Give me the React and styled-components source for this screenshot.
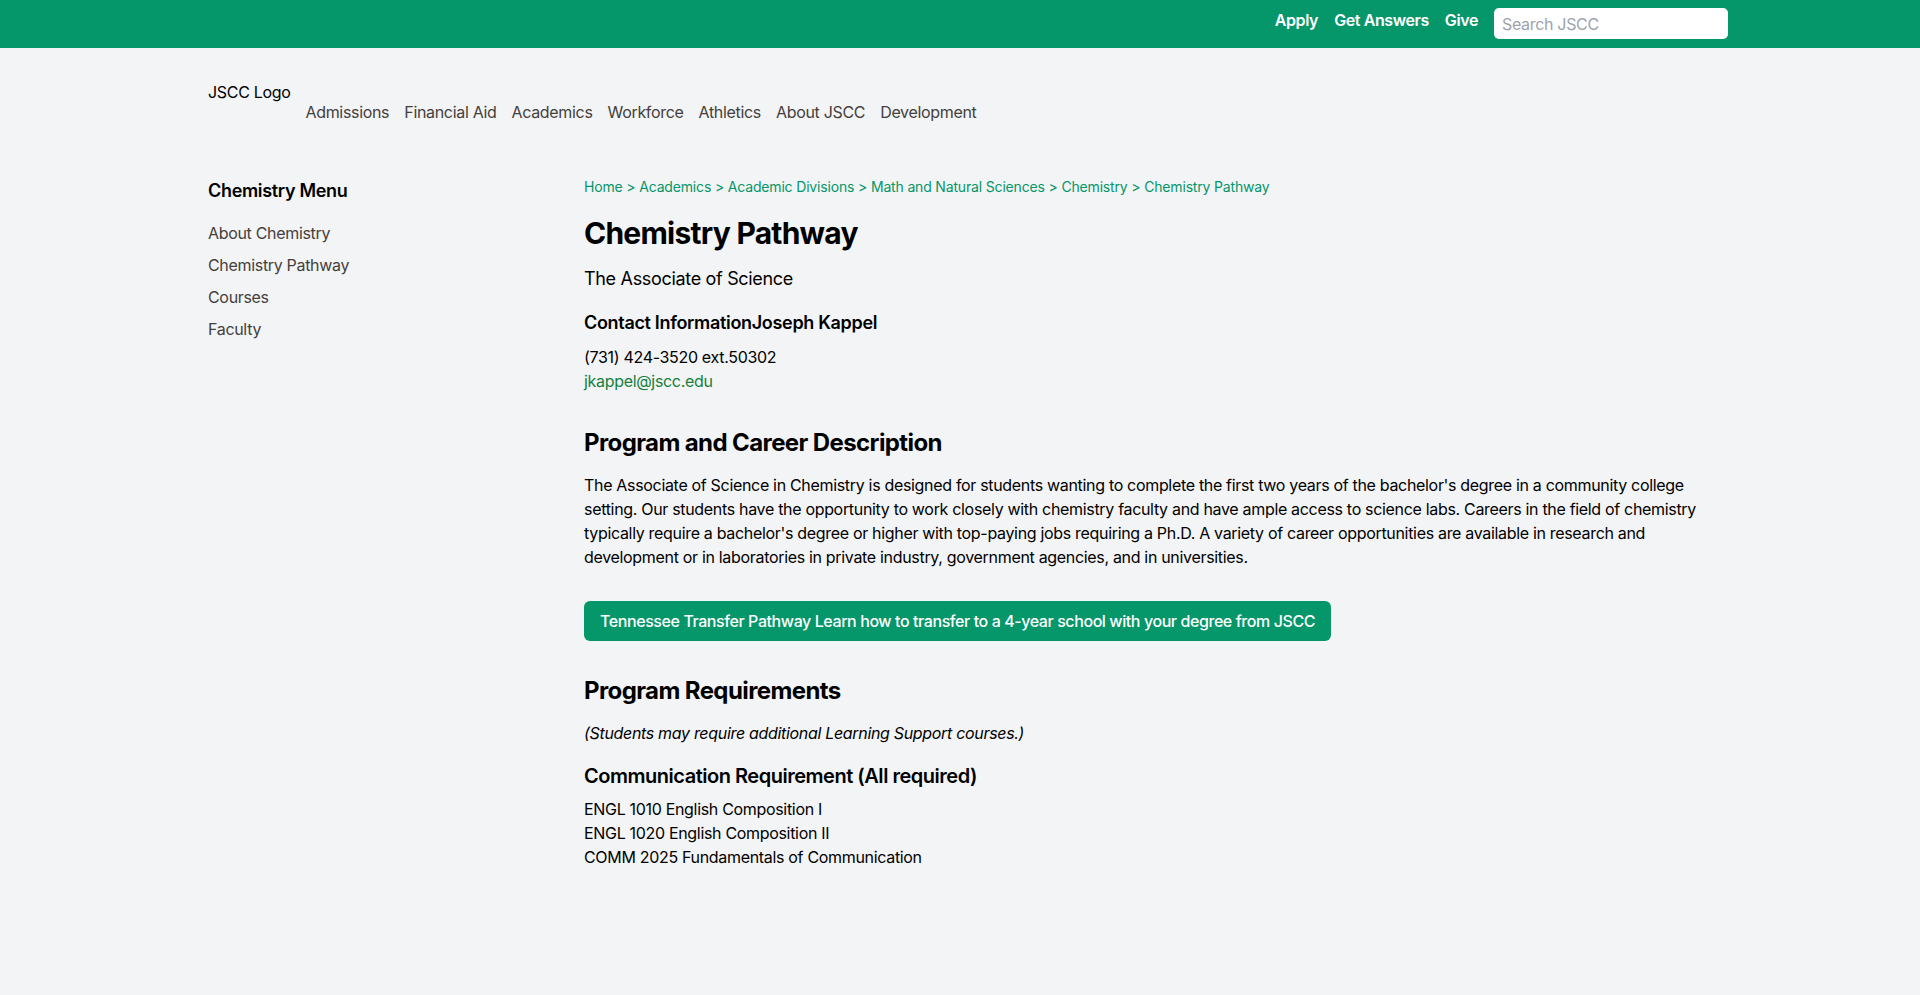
import React from 'react'
import styled, { createGlobalStyle } from 'styled-components'

const GlobalStyle = createGlobalStyle`
    * { box-sizing: border-box; }
    body {
        margin: 0;
        background: #f3f4f6;
        font-family: Inter, "Noto Sans", "Liberation Sans", sans-serif;
        color: #000;
        font-size: 16px;
        line-height: 24px;
        letter-spacing: -0.02em;
    }
    a { text-decoration: none; }
`

const TopBar = styled.div`
    background: #059669;
    height: 48px;
`

const TopInner = styled.div`
    max-width: 1536px;
    margin: 0 auto;
    display: flex;
    justify-content: flex-end;
    align-items: flex-start;
    gap: 16px;
    padding-top: 8px;
`

const TopLink = styled.a`
    color: #fff;
    font-weight: 600;
    font-size: 16px;
    line-height: 24px;
    letter-spacing: -0.025em;
`

const Search = styled.input`
    width: 234px;
    height: 31px;
    border: none;
    border-radius: 5px;
    padding: 0 8px;
    font-family: inherit;
    font-size: 16px;
    letter-spacing: -0.02em;
    background: #fff;
    &::placeholder { color: #9ca3af; }
`

const Container = styled.div`
    max-width: 1536px;
    margin: 0 auto;
    padding: 0 16px;
`

const Header = styled.header`
    display: flex;
    align-items: center;
    gap: 15px;
    padding: 32px 0 33px;
`

const Logo = styled.div`
    height: 64px;
    font-size: 16px;
    line-height: 24px;
`

const Nav = styled.nav`
    display: flex;
    gap: 15px;
`

const NavLink = styled.a`
    color: #44403c;
    font-size: 16px;
`

const Layout = styled.div`
    display: flex;
`

const Sidebar = styled.aside`
    width: 25%;
`

const SideTitle = styled.h3`
    margin: 0 0 16px;
    font-size: 18px;
    line-height: 28px;
    font-weight: 600;
`

const SideList = styled.ul`
    list-style: none;
    margin: 0;
    padding: 0;
    display: flex;
    flex-direction: column;
    gap: 8px;
`

const SideLink = styled.a`
    color: #44403c;
`

const Main = styled.main`
    width: 75%;
`

const Crumbs = styled.div`
    font-size: 14px;
    line-height: 20px;
    color: #059669;
    margin-bottom: 16px;
    letter-spacing: -0.012em;
`

const Title = styled.h1`
    margin: 0 0 14px;
    padding-top: 2px;
    font-size: 30px;
    line-height: 36px;
    font-weight: 700;
    letter-spacing: -0.025em;
`

const Sub = styled.p`
    margin: 0 0 16px;
    font-size: 18px;
    line-height: 28px;
`

const Heading = styled.h3`
    margin: 0 0 8px;
    font-size: 18px;
    line-height: 28px;
    font-weight: 600;
`

const SectionTitle = styled.h2`
    margin: 0 0 14px;
    padding-top: 2px;
    font-size: 24px;
    line-height: 32px;
    font-weight: 700;
    letter-spacing: -0.025em;
`

const SubTitle = styled.h3`
    margin: 0 0 7px;
    padding-top: 1px;
    font-size: 20px;
    line-height: 28px;
    font-weight: 600;
    letter-spacing: -0.024em;
`

const Contact = styled.div`
    margin-bottom: 32px;
`

const Line = styled.div``

const Email = styled.a`
    color: #15803d;
`

const Para = styled.p`
    margin: 0 0 32px;
    font-size: 16px;
    line-height: 24px;
`

const Button = styled.a`
    display: inline-block;
    background: #059669;
    color: #fff;
    font-weight: 500;
    padding: 8px 16px;
    border-radius: 6px;
    line-height: 24px;
    letter-spacing: -0.026em;
`

const ButtonWrap = styled.div`
    margin-bottom: 32px;
`

const Note = styled.p`
    margin: 0 0 16px;
    font-style: italic;
`

const Courses = styled.ul`
    list-style: none;
    margin: 0;
    padding: 0;
`

const crumbs = ['Home', 'Academics', 'Academic Divisions', 'Math and Natural Sciences', 'Chemistry', 'Chemistry Pathway']
const navItems = ['Admissions', 'Financial Aid', 'Academics', 'Workforce', 'Athletics', 'About JSCC', 'Development']
const sideItems = ['About Chemistry', 'Chemistry Pathway', 'Courses', 'Faculty']
const courses = ['ENGL 1010 English Composition I', 'ENGL 1020 English Composition II', 'COMM 2025 Fundamentals of Communication']

export default function App() {
    return (
        <>
            <GlobalStyle />
            <TopBar>
                <TopInner>
                    <TopLink href="#">Apply</TopLink>
                    <TopLink href="#">Get Answers</TopLink>
                    <TopLink href="#">Give</TopLink>
                    <Search placeholder="Search JSCC" />
                </TopInner>
            </TopBar>
            <Container>
                <Header>
                    <Logo>JSCC Logo</Logo>
                    <Nav>
                        {navItems.map(n => <NavLink key={n} href="#">{n}</NavLink>)}
                    </Nav>
                </Header>
                <Layout>
                    <Sidebar>
                        <SideTitle>Chemistry Menu</SideTitle>
                        <SideList>
                            {sideItems.map(s => <li key={s}><SideLink href="#">{s}</SideLink></li>)}
                        </SideList>
                    </Sidebar>
                    <Main>
                        <Crumbs>{crumbs.join(' > ')}</Crumbs>
                        <Title>Chemistry Pathway</Title>
                        <Sub>The Associate of Science</Sub>
                        <Contact>
                            <Heading>Contact InformationJoseph Kappel</Heading>
                            <Line>(731) 424-3520 ext.50302</Line>
                            <Line><Email href="#">jkappel@jscc.edu</Email></Line>
                        </Contact>
                        <SectionTitle>Program and Career Description</SectionTitle>
                        <Para>
                            The Associate of Science in Chemistry is designed for students wanting to complete the first two years of the bachelor's degree in a community college setting. Our students have the opportunity to work closely with chemistry faculty and have ample access to science labs. Careers in the field of chemistry typically require a bachelor's degree or higher with top-paying jobs requiring a Ph.D. A variety of career opportunities are available in research and development or in laboratories in private industry, government agencies, and in universities.
                        </Para>
                        <ButtonWrap>
                            <Button href="#">Tennessee Transfer Pathway Learn how to transfer to a 4-year school with your degree from JSCC</Button>
                        </ButtonWrap>
                        <SectionTitle>Program Requirements</SectionTitle>
                        <Note>(Students may require additional Learning Support courses.)</Note>
                        <SubTitle>Communication Requirement (All required)</SubTitle>
                        <Courses>
                            {courses.map(c => <li key={c}>{c}</li>)}
                        </Courses>
                    </Main>
                </Layout>
            </Container>
        </>
    )
}
